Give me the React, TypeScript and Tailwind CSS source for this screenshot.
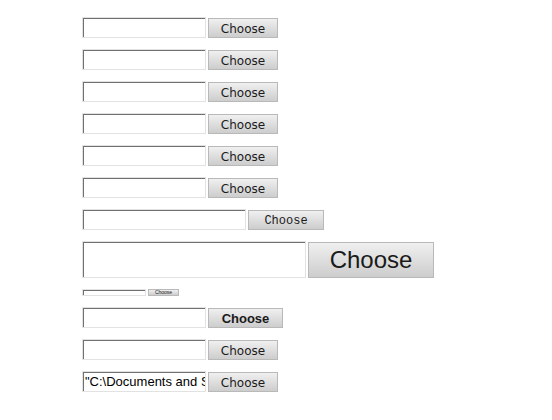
import React from 'react';

type Row = {
  inputW: string;
  inputH: string;
  btnW: string;
  btnH: string;
  font: string;
  value?: string;
};

const sans = "font-['DejaVu_Sans',sans-serif] text-[12px] pt-[2px]";

const rows: Row[] = [
  { inputW: 'w-[124px]', inputH: 'h-[21px]', btnW: 'w-[70px]', btnH: 'h-[20px]', font: sans },
  { inputW: 'w-[124px]', inputH: 'h-[21px]', btnW: 'w-[70px]', btnH: 'h-[20px]', font: sans },
  { inputW: 'w-[124px]', inputH: 'h-[21px]', btnW: 'w-[70px]', btnH: 'h-[20px]', font: sans },
  { inputW: 'w-[124px]', inputH: 'h-[21px]', btnW: 'w-[70px]', btnH: 'h-[20px]', font: sans },
  { inputW: 'w-[124px]', inputH: 'h-[21px]', btnW: 'w-[70px]', btnH: 'h-[20px]', font: sans },
  { inputW: 'w-[124px]', inputH: 'h-[21px]', btnW: 'w-[70px]', btnH: 'h-[20px]', font: sans },
  { inputW: 'w-[164px]', inputH: 'h-[21px]', btnW: 'w-[76px]', btnH: 'h-[20px]', font: "font-['Liberation_Mono',monospace] text-[12px] pt-[2px]" },
  { inputW: 'w-[224px]', inputH: 'h-[37px]', btnW: 'w-[126px]', btnH: 'h-[36px]', font: "font-['Liberation_Sans',sans-serif] text-[24px]" },
  { inputW: 'w-[64px]', inputH: 'h-[7px]', btnW: 'w-[31px]', btnH: 'h-[7px]', font: "font-['Liberation_Sans',sans-serif] text-[5px]" },
  { inputW: 'w-[124px]', inputH: 'h-[21px]', btnW: 'w-[75px]', btnH: 'h-[20px]', font: "font-['Liberation_Sans',sans-serif] text-[13px] font-bold" },
  { inputW: 'w-[124px]', inputH: 'h-[21px]', btnW: 'w-[70px]', btnH: 'h-[20px]', font: sans },
  { inputW: 'w-[124px]', inputH: 'h-[21px]', btnW: 'w-[70px]', btnH: 'h-[20px]', font: sans, value: '"C:\\Documents and Settings' },
];

function FileRow({ row }: { row: Row }) {
  return (
    <div className="flex items-end gap-[2px]">
      <div
        className={`${row.inputW} ${row.inputH} border border-[#e2e2e2] bg-white shadow-[inset_1px_1px_0_#707070] overflow-hidden whitespace-nowrap pl-[2px] font-['Liberation_Sans',sans-serif] text-[13px] leading-[19px] text-black`}
      >
        {row.value}
      </div>
      <div
        className={`${row.btnW} ${row.btnH} ${row.font} flex items-center justify-center border border-[#b9b9b9] bg-gradient-to-b from-[#f0f0f0] to-[#cdcdcd] text-[#1a1a1a] leading-none`}
      >
        Choose
      </div>
    </div>
  );
}

export default function App() {
  return (
    <div className="w-[552px] h-[420px] bg-white pl-[82px] pt-[17px] flex flex-col gap-[11px]">
      {rows.map((row, i) => (
        <FileRow key={i} row={row} />
      ))}
    </div>
  );
}
